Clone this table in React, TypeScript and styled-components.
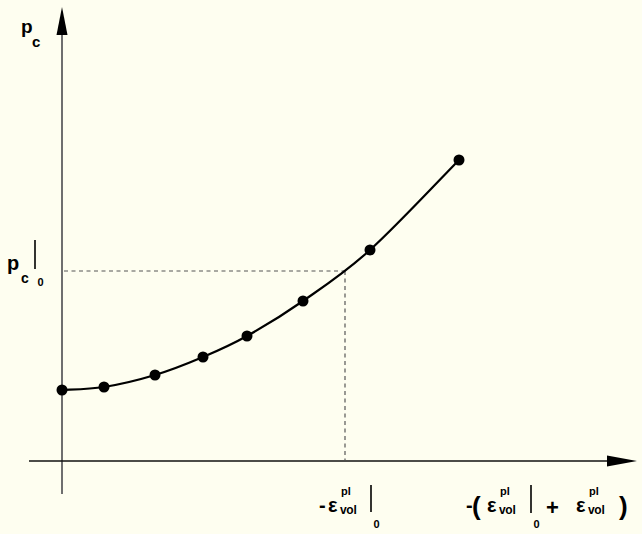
import React from "react";
import styled, { createGlobalStyle } from "styled-components";

const GlobalStyle = createGlobalStyle`
    html, body {
        margin: 0;
        padding: 0;
        background: #fefef0;
    }
`;

type Pt = [number, number];

// measured points on the hardening curve
const POINTS: Pt[] = [
    [62, 390],
    [104, 387],
    [155, 375],
    [203, 357],
    [247, 336],
    [303, 301],
    [370, 250],
    [459, 160],
];

// catmull-rom through the points, as cubic beziers
function smoothPath(pts: Pt[]) {
    let d = `M ${pts[0][0]} ${pts[0][1]}`;
    for (let i = 0; i < pts.length - 1; i++) {
        const p0 = pts[i - 1] || pts[i];
        const p1 = pts[i];
        const p2 = pts[i + 1];
        const p3 = pts[i + 2] || p2;
        const c1x = p1[0] + (p2[0] - p0[0]) / 6;
        const c1y = p1[1] + (p2[1] - p0[1]) / 6;
        const c2x = p2[0] - (p3[0] - p1[0]) / 6;
        const c2y = p2[1] - (p3[1] - p1[1]) / 6;
        d += ` C ${c1x} ${c1y}, ${c2x} ${c2y}, ${p2[0]} ${p2[1]}`;
    }
    return d;
}

const Style = {
    Page: styled.div`
        width: 642px;
        height: 534px;
        background: #fefef0;
        overflow: hidden;
    `,
    Figure: styled.svg`
        display: block;
        width: 642px;
        height: 534px;
    `,
    Label: styled.text<{ size: number }>`
        font-family: "Liberation Sans", Arial, sans-serif;
        font-weight: bold;
        font-size: ${({ size }) => size}px;
        fill: #000;
    `,
    Curve: styled.path`
        fill: none;
        stroke: #000;
        stroke-width: 2.2;
    `,
    Guide: styled.line`
        stroke: #555;
        stroke-width: 1.2;
        stroke-dasharray: 4 3.5;
    `,
    Bar: styled.line`
        stroke: #000;
        stroke-width: 1.6;
    `,
};

// eps with "pl" over "vol"
function Eps({ x }: { x: number }) {
    return (
        <>
            <Style.Label size={20} x={x} y={512}>
                ε
            </Style.Label>
            <Style.Label size={11} x={x + 13} y={495}>
                pl
            </Style.Label>
            <Style.Label size={12} x={x + 12} y={514} letterSpacing={-0.3}>
                vol
            </Style.Label>
        </>
    );
}

export default function App() {
    return (
        <Style.Page>
            <GlobalStyle />
            <Style.Figure viewBox="0 0 642 534">
                {/* axes */}
                <line x1={62} y1={30} x2={62} y2={494} stroke="#6f6f6f" strokeWidth={2} />
                <polygon points="62,7 56.5,35 67.5,35" fill="#000" />
                <line x1={29} y1={461} x2={610} y2={461} stroke="#111" strokeWidth={1.6} />
                <polygon points="637,461 607,455.5 607,466.5" fill="#000" />

                {/* guide lines */}
                <Style.Guide x1={64} y1={271} x2={345} y2={271} />
                <Style.Guide x1={345} y1={271} x2={345} y2={460} />

                {/* curve and points */}
                <Style.Curve d={smoothPath(POINTS)} />
                {POINTS.map(([x, y]) => (
                    <circle key={x} cx={x} cy={y} r={5.5} fill="#000" />
                ))}

                {/* p_c */}
                <Style.Label size={19} x={21} y={33}>
                    p
                </Style.Label>
                <Style.Label size={15} x={32} y={47}>
                    c
                </Style.Label>

                {/* p_c |0 */}
                <Style.Label size={20} x={7} y={270}>
                    p
                </Style.Label>
                <Style.Label size={14} x={21} y={283}>
                    c
                </Style.Label>
                <Style.Bar x1={35} y1={240} x2={35} y2={269} />
                <Style.Label size={11} x={37.5} y={286}>
                    0
                </Style.Label>

                {/* -eps |0 */}
                <Style.Label size={20} x={319} y={512}>
                    -
                </Style.Label>
                <Eps x={328} />
                <Style.Bar x1={371} y1={485} x2={371} y2={512} />
                <Style.Label size={11} x={373.5} y={528}>
                    0
                </Style.Label>

                {/* -(eps|0 + eps) */}
                <Style.Label size={20} x={466} y={512}>
                    -
                </Style.Label>
                <Style.Label size={26} x={472} y={515}>
                    (
                </Style.Label>
                <Eps x={487} />
                <Style.Bar x1={531} y1={485} x2={531} y2={513} />
                <Style.Label size={11} x={533.5} y={528}>
                    0
                </Style.Label>
                <Style.Label size={22} x={546} y={515}>
                    +
                </Style.Label>
                <Eps x={576} />
                <Style.Label size={26} x={619} y={515}>
                    )
                </Style.Label>
            </Style.Figure>
        </Style.Page>
    );
}
